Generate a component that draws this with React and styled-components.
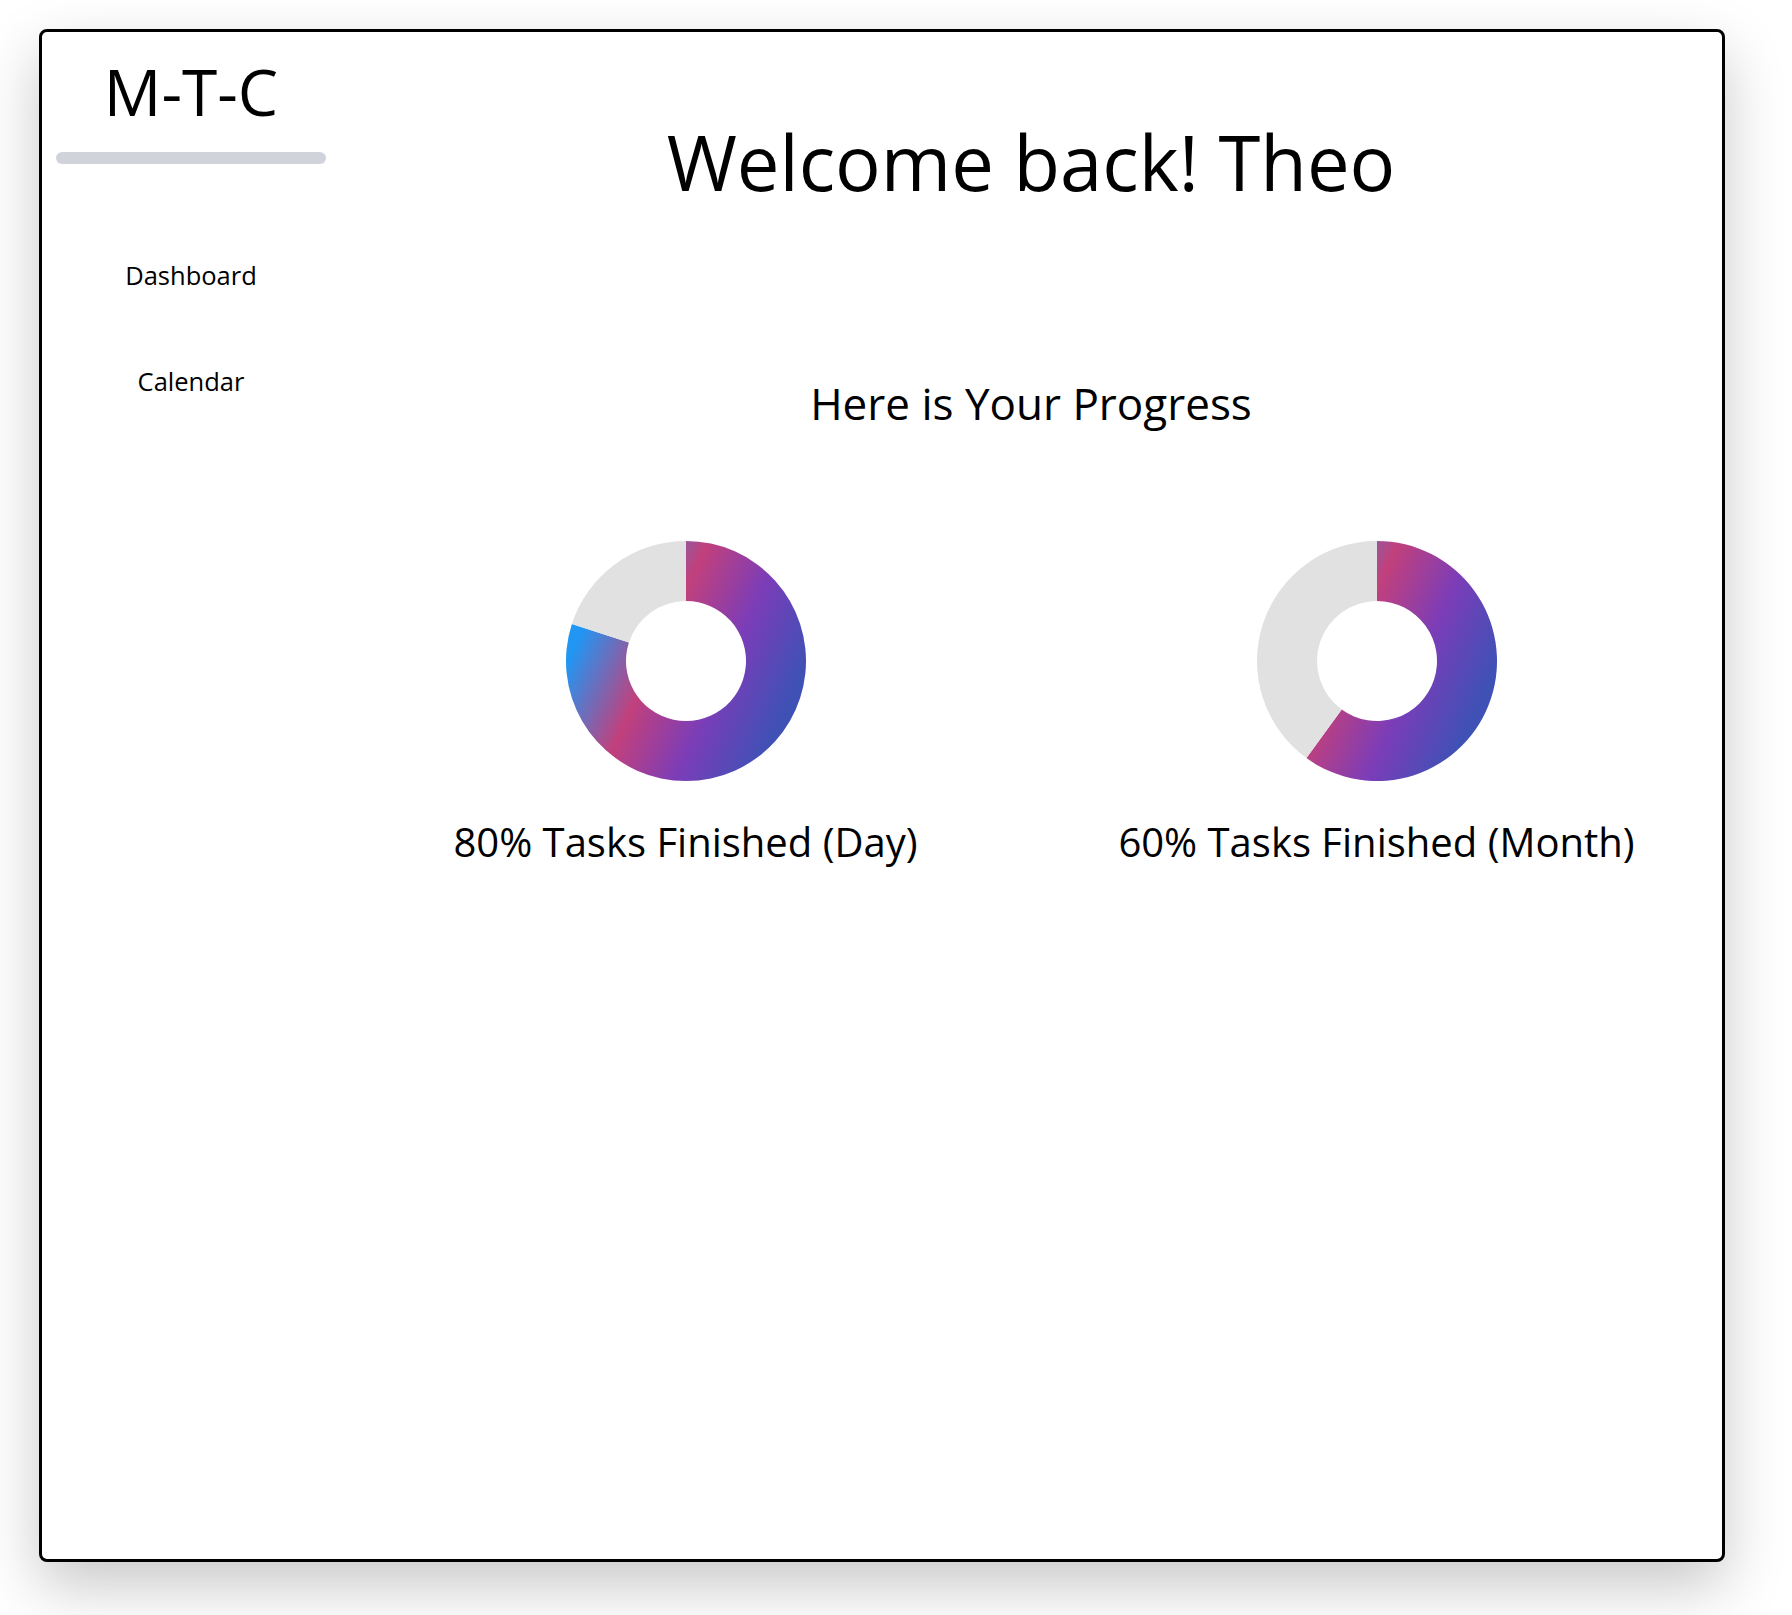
import React from "react";
import styled, { createGlobalStyle } from "styled-components";

const GlobalStyle = createGlobalStyle`
  html, body {
    margin: 0;
    padding: 0;
    background: #ffffff;
  }
  body {
    font-family: "Open Sans", "Noto Sans", Arial, sans-serif;
    color: #000;
  }
`;

const Page = styled.div`
  padding: 29px 0 0 39px;
  min-height: 1615px;
  box-sizing: border-box;
`;

const Card = styled.div`
  box-sizing: border-box;
  width: 1686px;
  height: 1533px;
  border: 3px solid #000;
  border-radius: 8px;
  background: #fff;
  box-shadow: 0 24px 60px rgba(0, 0, 0, 0.22);
  display: flex;
`;

const Sidebar = styled.aside`
  width: 298px;
  flex: none;
  display: flex;
  flex-direction: column;
  align-items: center;
  padding-top: 28px;
`;

const Logo = styled.div`
  font-size: 64px;
  line-height: 1;
  font-weight: 400;
`;

const Divider = styled.div`
  width: 270px;
  height: 12px;
  border-radius: 6px;
  background: #d1d3da;
  margin-top: 28px;
`;

const Nav = styled.nav`
  display: flex;
  flex-direction: column;
  align-items: center;
  gap: 80px;
  margin-top: 99px;
`;

const NavItem = styled.a`
  font-size: 25.5px;
  line-height: 1;
  color: #000;
  text-decoration: none;
  cursor: pointer;
`;

const Main = styled.main`
  flex: 1;
  display: flex;
  flex-direction: column;
  align-items: center;
  padding-top: 92px;
`;

const Title = styled.h1`
  margin: 0;
  font-size: 76px;
  line-height: 1;
  font-weight: 400;
`;

const Subtitle = styled.h2`
  margin: 181px 0 0;
  font-size: 44px;
  line-height: 1;
  font-weight: 400;
`;

const Charts = styled.div`
  align-self: stretch;
  display: grid;
  grid-template-columns: 1fr 1fr;
  margin-top: 116px;
`;

const ChartCol = styled.div`
  display: flex;
  flex-direction: column;
  align-items: center;
`;

const ChartLabel = styled.div`
  margin-top: 41px;
  font-size: 40px;
  line-height: 1;
  white-space: nowrap;
`;

const Svg = styled.svg`
  display: block;
`;

function pt(cx, cy, r, a) {
  const rad = (a * Math.PI) / 180;
  return [cx + r * Math.sin(rad), cy - r * Math.cos(rad)];
}

function sector(cx, cy, R, r, a0, a1) {
  const large = a1 - a0 > 180 ? 1 : 0;
  const [x0, y0] = pt(cx, cy, R, a0);
  const [x1, y1] = pt(cx, cy, R, a1);
  const [x2, y2] = pt(cx, cy, r, a1);
  const [x3, y3] = pt(cx, cy, r, a0);
  return `M${x0} ${y0} A${R} ${R} 0 ${large} 1 ${x1} ${y1} L${x2} ${y2} A${r} ${r} 0 ${large} 0 ${x3} ${y3} Z`;
}

function Donut({ value, id }) {
  const c = 120;
  const R = 120;
  const r = 60;
  const end = value * 360;
  return (
    <Svg width={240} height={240} viewBox="0 0 240 240">
      <defs>
        <linearGradient
          id={id}
          gradientUnits="userSpaceOnUse"
          x1="6.25"
          y1="68.1"
          x2="233.75"
          y2="171.9"
        >
          <stop offset="0.07" stopColor="#2196f3" />
          <stop offset="0.38" stopColor="#c2407c" />
          <stop offset="0.66" stopColor="#7b3db8" />
          <stop offset="0.94" stopColor="#3f51b5" />
        </linearGradient>
      </defs>
      <path d={sector(c, c, R, r, 0, end)} fill={`url(#${id})`} />
      <path d={sector(c, c, R, r, end, 360)} fill="#e1e1e1" />
    </Svg>
  );
}

export default function App() {
  return (
    <>
      <GlobalStyle />
      <Page>
        <Card>
          <Sidebar>
            <Logo>M-T-C</Logo>
            <Divider />
            <Nav>
              <NavItem>Dashboard</NavItem>
              <NavItem>Calendar</NavItem>
            </Nav>
          </Sidebar>
          <Main>
            <Title>Welcome back! Theo</Title>
            <Subtitle>Here is Your Progress</Subtitle>
            <Charts>
              <ChartCol>
                <Donut value={0.8} id="gradDay" />
                <ChartLabel>80% Tasks Finished (Day)</ChartLabel>
              </ChartCol>
              <ChartCol>
                <Donut value={0.6} id="gradMonth" />
                <ChartLabel>60% Tasks Finished (Month)</ChartLabel>
              </ChartCol>
            </Charts>
          </Main>
        </Card>
      </Page>
    </>
  );
}
